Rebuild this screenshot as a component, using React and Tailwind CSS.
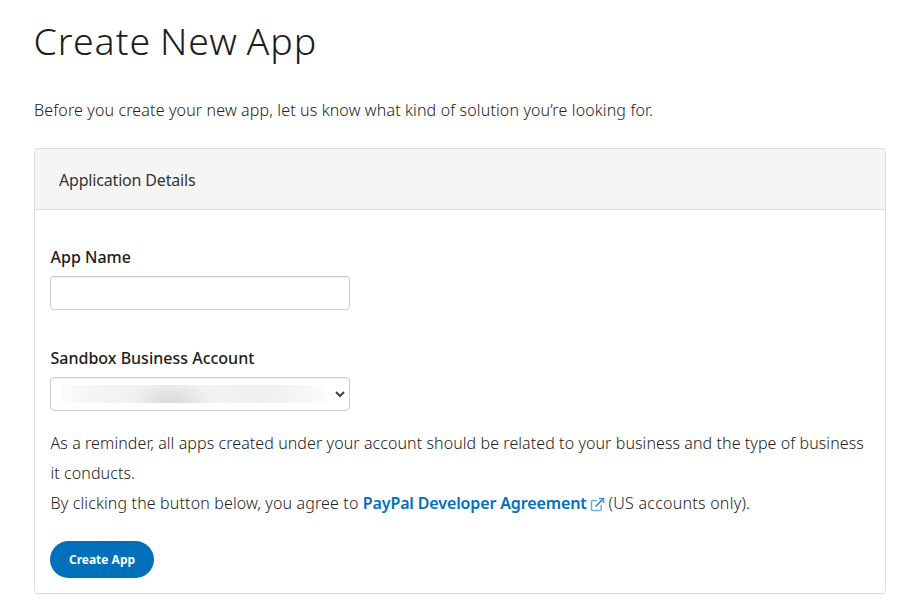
import React from "react";

function ExternalIcon() {
  return (
    <svg className="ml-[3px] mr-[4px] inline-block h-[15px] w-[15px] align-[-3px]" viewBox="0 0 15 15" fill="none" aria-hidden="true">
      <path d="M7 3.5H2.5Q1.5 3.5 1.5 4.5V12.5Q1.5 13.5 2.5 13.5H10.2Q11.2 13.5 11.2 12.5V8" stroke="#68b0da" strokeWidth="1.5" />
      <path d="M12.8 2.2L5.6 9.6" stroke="#1f86c6" strokeWidth="1.5" />
      <path d="M9 1.5H13.5V6" stroke="#3d98ce" strokeWidth="1.5" />
    </svg>
  );
}

function Field({ label, children, className = "" }) {
  return (
    <div className={className}>
      <label className="mb-1 block pl-[0.5px] text-[16px] font-[480] leading-[30px] text-[#1c1c1c]">{label}</label>
      {children}
    </div>
  );
}

export default function App() {
  return (
    <main className="h-[616px] w-[919px] overflow-hidden bg-white pl-[34px] pr-[33px] pt-[17px] font-['Noto_Sans','Liberation_Sans',sans-serif] text-[#222]">
      <h1 className="-ml-[0.5px] mb-[30px] text-[37.5px] font-light leading-[48px] tracking-[1px] text-[#1c1c1c] [word-spacing:-2px]">Create New App</h1>
      <p className="mb-[23px] text-[16px] font-light leading-[30px] tracking-[0.14px]">
        Before you create your new app, let us know what kind of solution you’re looking for.
      </p>
      <section className="h-[446px] rounded-[4px] border border-[#ddd] shadow-[0_1px_1px_rgba(0,0,0,0.05)]">
        <header className="flex h-[61px] items-center rounded-t-[3px] border-b border-[#ddd] bg-[#f5f5f5] pl-[24px] pt-[2px]">
          <h2 className="text-[16px] tracking-[-0.18px] text-[#333]">Application Details</h2>
        </header>
        <div className="px-[15px] pt-[32px]">
          <Field label="App Name">
            <input className="block h-[34px] w-[300px] rounded-[4px] border border-[#ccc] bg-white px-3 shadow-[inset_0_1px_1px_rgba(0,0,0,0.075)]" />
          </Field>
          <Field label="Sandbox Business Account" className="mt-[33px]">
            <div className="flex h-[34px] w-[300px] items-center justify-between rounded-[4px] border border-[#ccc] bg-white pl-[11px] pr-[4px] shadow-[inset_0_1px_1px_rgba(0,0,0,0.075)]">
              <div className="h-[18px] w-[263px] bg-[radial-gradient(ellipse_40px_20px_at_42%_95%,#dadada,transparent),linear-gradient(90deg,#fbfbfb,#f4f4f4_14%,#eeeeee_38%,#f2f2f2_55%,#efefef_76%,#f6f6f6_92%,#fcfcfc)]" />
              <svg className="h-[10px] w-[10px]" viewBox="0 0 10 10" fill="none" stroke="#444" strokeWidth="2" aria-hidden="true">
                <path d="M1 3L5 7L9 3" />
              </svg>
            </div>
          </Field>
          <p className="mt-[17px] whitespace-nowrap pl-[0.5px] text-[16px] font-light leading-[30px] tracking-[0.08px]">
            As a reminder, all apps created under your account should be related to your business and the type of business
            <br />
            it conducts.
          </p>
          <p className="whitespace-nowrap pl-[0.5px] text-[16px] font-light leading-[30px] tracking-[0.14px]">
            By clicking the button below, you agree to{" "}
            <a className="font-semibold tracking-[-0.13px] text-[#0070ba]">PayPal Developer Agreement<ExternalIcon /></a>
            <span className="tracking-[0.25px]">(US accounts only).</span>
          </p>
          <button className="mt-[23px] block h-[37px] w-[104px] rounded-full bg-[#0070ba] text-[12px] font-bold text-white">Create App</button>
        </div>
      </section>
    </main>
  );
}
